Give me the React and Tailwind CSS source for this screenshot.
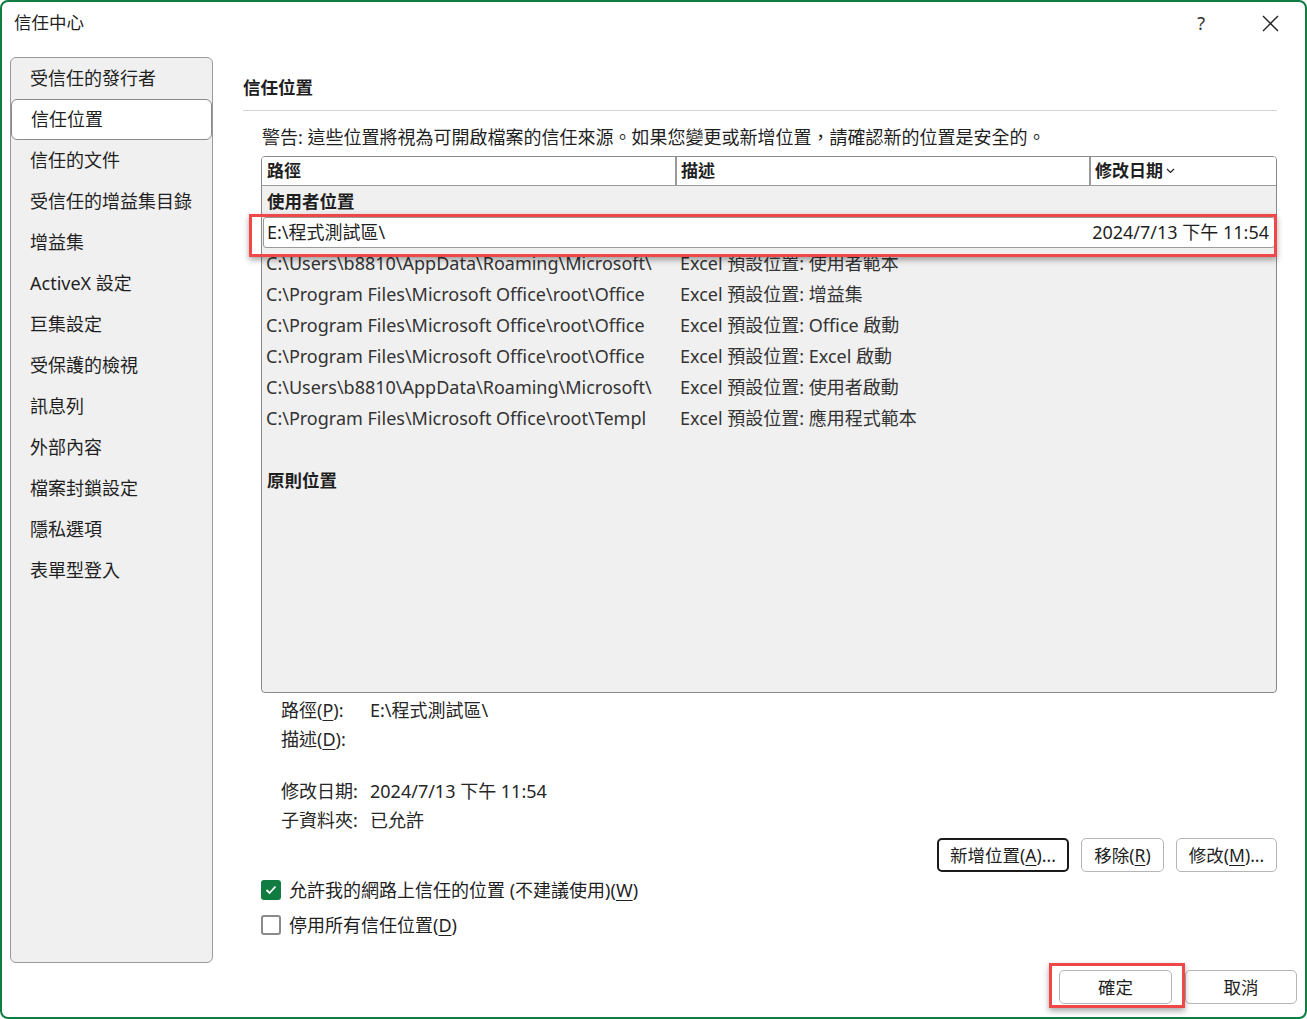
import React from 'react';

const font = { fontFamily: '"Noto Sans", "Noto Sans CJK TC", sans-serif' };

const sideItems = [
  '受信任的發行者', '信任位置', '信任的文件', '受信任的增益集目錄', '增益集', 'ActiveX 設定',
  '巨集設定', '受保護的檢視', '訊息列', '外部內容', '檔案封鎖設定', '隱私選項', '表單型登入'
];

const userRows = [
  ['C:\\Users\\b8810\\AppData\\Roaming\\Microsoft\\', 'Excel 預設位置: 使用者範本'],
  ['C:\\Program Files\\Microsoft Office\\root\\Office', 'Excel 預設位置: 增益集'],
  ['C:\\Program Files\\Microsoft Office\\root\\Office', 'Excel 預設位置: Office 啟動'],
  ['C:\\Program Files\\Microsoft Office\\root\\Office', 'Excel 預設位置: Excel 啟動'],
  ['C:\\Users\\b8810\\AppData\\Roaming\\Microsoft\\', 'Excel 預設位置: 使用者啟動'],
  ['C:\\Program Files\\Microsoft Office\\root\\Templ', 'Excel 預設位置: 應用程式範本'],
];

function Key({ k }) {
  return <span className="underline underline-offset-[3px] decoration-1">{k}</span>;
}

function Btn({ children, main, className = '' }) {
  return (
    <button
      className={
        'h-[34px] rounded-[5px] bg-white text-[17.5px] text-[#1f1f1f] flex items-center justify-center ' +
        (main ? 'border-2 border-[#1a1a1a] bg-[#f5f5f5] ' : 'border border-[#b5b5b5] ') +
        className
      }
    >
      {children}
    </button>
  );
}

export default function App() {
  return (
    <div style={font} className="w-[1307px] h-[1019px] bg-white border-2 border-[#107c41] rounded-[8px] flex flex-col overflow-hidden text-[#1f1f1f] relative">
      {/* title bar */}
      <div className="h-[55px] flex items-start justify-between pl-[12px] pr-[26px] pt-[8px]">
        <div className="text-[17.5px] leading-[24px]">信任中心</div>
        <div className="flex items-center gap-[57px] pt-[1px]">
          <span className="text-[18px] leading-[24px] text-[#333]">?</span>
          <svg width="17" height="17" viewBox="0 0 17 17" fill="none" stroke="#222" strokeWidth="1.4">
            <path d="M1 1 L16 16 M16 1 L1 16" />
          </svg>
        </div>
      </div>

      {/* main */}
      <div className="h-[906px] flex pl-[8px] pr-[28px]">
        <div className="w-[203px] bg-[#f0f0f0] border border-[#9a9a9a] rounded-[6px] flex flex-col">
          {sideItems.map((s, i) => (
            <div
              key={s}
              className={
                'h-[41px] flex items-center pl-[19px] text-[18px] rounded-[6px] ' +
                (i === 1 ? 'bg-white border border-[#8a8a8a] pl-[18px]' : '')
              }
            >
              {s}
            </div>
          ))}
        </div>

        <div className="flex-1 ml-[30px] flex flex-col">
          <div className="pt-[18px] pb-[11px] border-b border-[#d4d4d4]">
            <div className="text-[17.5px] leading-[24px] font-semibold">信任位置</div>
          </div>
          <div className="mt-[14px] pl-[19px] text-[18px] leading-[24px]">
            警告: 這些位置將視為可開啟檔案的信任來源。如果您變更或新增位置，請確認新的位置是安全的。
          </div>

          {/* table */}
          <div className="ml-[18px] mt-[7px] h-[537px] border border-[#8a8a8a] rounded-[4px] bg-[#f0f0f0] flex flex-col overflow-hidden text-[18px]">
            <div className="h-[29px] bg-white border-b border-[#9a9a9a] flex font-semibold text-[17px] shrink-0">
              <div className="w-[415px] border-r-2 border-[#9a9a9a] pl-[5px] flex items-center">路徑</div>
              <div className="w-[414px] border-r-2 border-[#9a9a9a] pl-[4px] flex items-center">描述</div>
              <div className="flex-1 pl-[4px] flex items-center gap-[3px]">
                修改日期
                <svg width="9" height="6" viewBox="0 0 9 6" fill="none" stroke="#222" strokeWidth="1.2">
                  <path d="M1 1 L4.5 4.5 L8 1" />
                </svg>
              </div>
            </div>
            <div className="h-[31px] flex items-center pl-[5px] font-semibold text-[17.5px] shrink-0">使用者位置</div>
            <div className="h-[31px] mx-[1px] bg-white border border-[#9a9a9a] rounded-[3px] flex items-center pl-[3px] pr-[5px] shrink-0">
              <span className="flex-1">E:\程式測試區\</span>
              <span>2024/7/13 下午 11:54</span>
            </div>
            {userRows.map(([p, d], i) => (
              <div key={i} className="h-[31px] flex items-center text-[#333] shrink-0">
                <div className="w-[414px] pl-[4px] pr-[20px] whitespace-nowrap overflow-hidden">{p}</div>
                <div className="pl-[4px]">{d}</div>
              </div>
            ))}
            <div className="h-[31px] shrink-0" />
            <div className="h-[31px] flex items-center pl-[5px] font-semibold text-[17.5px] shrink-0">原則位置</div>
          </div>

          {/* details */}
          <div className="pl-[38px] mt-[3px] text-[18px] leading-[29px] text-[#262626]">
            <div className="flex">
              <span className="w-[89px]">路徑(<Key k="P" />):</span>
              <span>E:\程式測試區\</span>
            </div>
            <div className="flex">
              <span className="w-[89px]">描述(<Key k="D" />):</span>
            </div>
            <div className="flex mt-[23px]">
              <span className="w-[89px]">修改日期:</span>
              <span>2024/7/13 下午 11:54</span>
            </div>
            <div className="flex">
              <span className="w-[89px]">子資料夾:</span>
              <span>已允許</span>
            </div>
          </div>

          <div className="flex justify-end gap-[12px] mt-[3px]">
            <Btn main className="w-[132px]">新增位置(<Key k="A" />)...</Btn>
            <Btn className="w-[83px]">移除(<Key k="R" />)</Btn>
            <Btn className="w-[101px]">修改(<Key k="M" />)...</Btn>
          </div>

          <div className="ml-[18px] mt-[3px] flex flex-col gap-[5px] text-[18px]">
            <label className="h-[30px] flex items-center gap-[8px]">
              <span className="w-[20px] h-[20px] rounded-[3px] bg-[#107c41] flex items-center justify-center">
                <svg width="12" height="10" viewBox="0 0 12 10" fill="none" stroke="#fff" strokeWidth="1.8">
                  <path d="M1.5 5 L4.5 8 L10.5 1.5" />
                </svg>
              </span>
              <span>允許我的網路上信任的位置 (不建議使用)(<Key k="W" />)</span>
            </label>
            <label className="h-[30px] flex items-center gap-[8px]">
              <span className="w-[20px] h-[20px] rounded-[3px] border-2 border-[#8a8a8a] bg-white" />
              <span>停用所有信任位置(<Key k="D" />)</span>
            </label>
          </div>
        </div>
      </div>

      {/* footer */}
      <div className="flex justify-end gap-[13px] pt-[7px] pr-[8px]">
        <Btn className="w-[113px] border-[#9a9a9a]">確定</Btn>
        <Btn className="w-[112px]">取消</Btn>
      </div>

      {/* red callouts */}
      <div className="absolute left-[247px] top-[212px] w-[1028px] h-[43px] border-[3px] border-[#f04848] shadow-[0_3px_6px_rgba(0,0,0,0.35)] pointer-events-none" />
      <div className="absolute left-[1047px] top-[961px] w-[136px] h-[45px] border-[3px] border-[#f04848] shadow-[0_3px_6px_rgba(0,0,0,0.35)] pointer-events-none" />
    </div>
  );
}
